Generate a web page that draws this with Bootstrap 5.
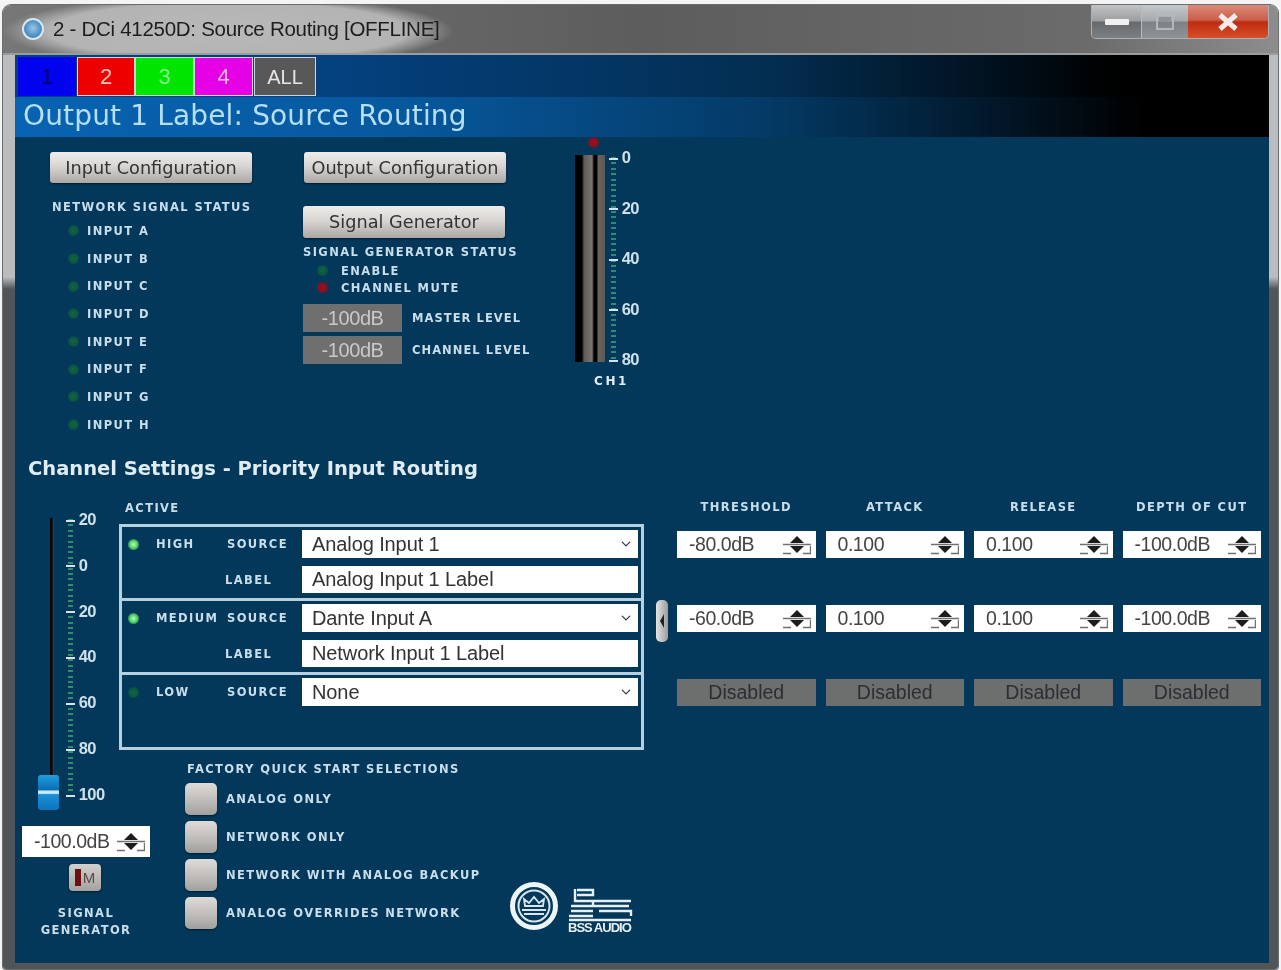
<!DOCTYPE html>
<html lang="en">
<head>
    <meta charset="UTF-8">
    <meta name="viewport" content="width=device-width, initial-scale=1.0">
    <title>Source Routing</title>
    <link href="https://cdn.jsdelivr.net/npm/bootstrap@5.3.3/dist/css/bootstrap.min.css" rel="stylesheet">
    <script src="https://cdn.jsdelivr.net/npm/bootstrap@5.3.3/dist/js/bootstrap.bundle.min.js"></script>
    <style>
        html, body { margin: 0; height: 970px; overflow: hidden; background: #f4f4f4; }
        body { font-family: "Liberation Sans", sans-serif; }

        /* window frame, slightly soft like the source capture */
        .appWin { margin: 5px 3px 0 3px; height: 964px; border-radius: 8px 8px 3px 3px; padding: 0 9px 6px 12px; filter: blur(.55px);
            background: linear-gradient(to bottom, #b9bdc0 0, #b9bdc0 272px, #4f5559 284px, #4f5559 100%);
            box-shadow: 0 0 0 1px #6a6d70; }
        .titleBar { height: 50px; margin: 0 -9px 0 -12px; padding-left: 19px; border-radius: 8px 8px 0 0;
            border-bottom: 2px solid #9a9c9d;
            background: radial-gradient(ellipse 225px 36px at 225px 26px, #b9b9b9 0, #b3b3b3 80%, rgba(150,150,150,0) 100%), linear-gradient(to right, #777 0, #5d5d5d 50%, #6b6b6b 85%, #8d8d8d 100%); }
        .appIcon { width: 22px; height: 22px; border-radius: 50%; flex: none; border: 2px solid #d6e6f2;
            background: radial-gradient(circle at 50% 45%, #9cc6e6 0, #4b8fc4 60%, #2d6ea4 100%); }
        .titleTxt { font-size: 20.5px; color: #1d1d1d; margin-left: 9px; letter-spacing: -.28px; margin-top: 1px; }
        .capBtns { margin-right: 9px; height: 34px; align-self: flex-start; border: 1px solid #aab0b3; border-top: 0; border-radius: 0 0 5px 5px; overflow: hidden; }
        .capBtn { height: 33px; display: flex; align-items: center; justify-content: center; }
        .capMin { width: 50px; background: linear-gradient(#c2c4c5 0, #9b9d9f 48%, #666a6d 52%, #7c8083 100%); border-right: 1px solid #b8babc; }
        .capMax { width: 46px; background: linear-gradient(#c4c8ca 0, #a5a9ab 48%, #7b8184 52%, #8d9396 100%); }
        .capClose { width: 80px; background: linear-gradient(#dd8a7a 0, #c95f4b 45%, #bf2b10 52%, #d64f2a 100%); }

        /* client area */
        .clientArea { height: 908px; background: #03385a; }
        .bandTop { height: 42px; padding: 2px 0 0 3px; background: linear-gradient(to right, #053f7e 0, #04417f 25%, #032e52 60%, #000 88%, #000 100%); }
        .chanTab { height: 39px; border-radius: 0; border: 1px solid #c9d6dc; padding: 0; font-size: 22px; line-height: 1; color: #fff; }
        .tabOne, .tabOne:hover { width: 58px; background: #0202ee; border-color: #0202ee; color: #01015e; }
        .tabTwo, .tabTwo:hover { width: 58px; background: #ee0000; margin-left: 1px; color: #ffc9c0; }
        .tabThree, .tabThree:hover { width: 59px; background: #00e500; color: #86f48a; }
        .tabFour, .tabFour:hover { width: 59px; background: #e600e6; color: #f9b9f4; }
        .tabAll, .tabAll:hover { width: 62px; background: #585858; margin-left: 1px; color: #e6e6e6; font-size: 20px; }
        .bandTitle { height: 40px; padding-left: 8px; font-family: "DejaVu Sans", sans-serif; font-size: 28px; letter-spacing: .15px; line-height: 37px; color: #b5dff5;
            background: linear-gradient(to right, #0863b2 0, #07599f 30%, #043a66 60%, #000 90%, #000 100%); }

        /* square label font */
        .tinyLbl { font-family: "DejaVu Sans", sans-serif; font-weight: 700; font-size: 11.5px; letter-spacing: 1.4px; line-height: 14px; color: #c8deeb; white-space: nowrap; }

        .greyBtn { width: 202px; height: 31px; padding: 0; border: 0; border-radius: 3px; font-family: "DejaVu Sans", sans-serif; font-size: 17.7px; line-height: 26px; color: #333; white-space: nowrap;
            background: linear-gradient(#efedeb 0, #d8d5d2 45%, #aaa7a4 100%); box-shadow: 0 1px 2px #011c2e; }
        .outCfgBtn { margin: 0 0 23px 1px; }
        .genBtn { height: 32px; }

        .ledDot { width: 11px; height: 11px; border-radius: 50%; flex: none; }
        .ledOff { background: radial-gradient(circle, #11663a 0, #0d5a42 45%, rgba(3,56,90,0) 100%); }
        .ledOn { background: radial-gradient(circle, #c9f8b8 0, #54d866 45%, rgba(3,56,90,0) 100%); }
        .ledRed { background: radial-gradient(circle, #a0101c 0, #8a0f22 50%, rgba(3,56,90,0) 100%); }

        /* upper part */
        .upperPane { height: 318px; }
        .netCol { width: 288px; padding: 15px 0 0 35px; }
        .netHead { margin-top: 17px; margin-bottom: 3px; padding-left: 2px; }
        .netRow { height: 27.7px; padding-left: 18px; gap: 8px; }
        .genCol { width: 272px; padding-top: 15px; }
        .genStatus { margin-top: 7px; }
        .genRow { height: 17px; padding-left: 14px; gap: 13px; }
        .genFirst { margin-top: 3px; }
        .levelBox { width: 99px; height: 28px; background: #6f6f6f; color: #c9c9c9; font-size: 20px; line-height: 28px; text-align: center; letter-spacing: -.4px; }
        .levelTxt { margin-left: 2px; letter-spacing: 1.05px; }
        .meterCol { width: 76px; }
        .clipLed { width: 11px; height: 11px; margin: 0 0 7px 13px; }
        .meterBar { width: 31px; height: 207px; background: linear-gradient(to right, #000 0, #000 7px, #5f5a5a 9px, #7a7472 17px, #000 19px, #000 22px, #6a6460 23px, #5b5855 30px, #03385a 31px); }
        .scaleCol { height: 222px; margin-top: -8px; width: 44px; font-size: 16.5px; font-weight: 700; line-height: 20px; color: #cfe0ea; letter-spacing: -.6px;
            background: repeating-linear-gradient(to bottom, #2f8c72 0, #2f8c72 2px, transparent 2px, transparent 5.4px) 2px 10px / 5px calc(100% - 20px) no-repeat; }
        .scaleRow::before { content: ""; display: inline-block; width: 9px; height: 2px; background: #d5e3ea; vertical-align: middle; margin: 0 4px 0 0; }
        .ch1Txt { margin: 5px 0 0 19px; font-size: 12px; letter-spacing: 2.6px; color: #e2edf3; }

        .chHeading { height: 26px; padding-left: 13px; font-family: "DejaVu Sans", sans-serif; font-weight: 700; font-size: 19.5px; line-height: 28px; color: #dfecf3; }

        /* lower part */
        .faderCol { width: 104px; padding-top: 28px; flex: none; }
        .faderWrap { height: 295px; padding-left: 35px; position: relative; }
        .faderTrack { width: 4px; height: 272px; margin-top: 9px; background: linear-gradient(to right, #000, #111 60%, #33505f); }
        .faderKnob { position: absolute; left: 23px; top: 266px; width: 21px; height: 35px; border-radius: 3px;
            background: linear-gradient(#1f9fe0 0, #0a6fb5 42%, #bfe7f8 46%, #d8f0fb 52%, #1c8fd4 56%, #0c74bd 100%); }
        .faderScale { width: 56px; height: 295px; margin: 0 0 0 12px; }
        .faderSpin { width: 128px; height: 31px; margin: 22px 0 0 7px; background: #fff; }
        .muteBtn { width: 32px; height: 27px; margin: 7px 0 0 54px; padding: 0; border: 0; border-radius: 4px; font-size: 15px; line-height: 27px; color: #5a4a4a;
            background: linear-gradient(#d2cfcc, #a5a3a1); box-shadow: 0 1px 2px #011c2e; }
        .muteBar { display: inline-block; width: 6px; height: 17px; background: #6d1015; vertical-align: -3px; margin-right: 2px; }
        .sigGenLbl { width: 142px; margin-top: 14px; text-align: center; line-height: 17px; }

        .midCol { width: 525px; padding-top: 20px; flex: none; }
        .activeLbl { padding-left: 6px; }
        .routeBox { height: 226px; margin-top: 9px; border: 3px solid #b7d0dd; }
        .routeRow { height: 71px; padding: 3px 0 0 0; }
        .routeRow + .routeRow { border-top: 3px solid #b7d0dd; height: 74px; }
        .ledCell { width: 34px; padding-left: 6px; flex: none; }
        .lvlCell { width: 69px; flex: none; }
        .srcCell { width: 77px; flex: none; }
        .srcName { padding-left: 2px; }
        .routeField { width: 336px; height: 28px; border: 0; border-radius: 0; padding: 0 0 0 10px; font-size: 20px; line-height: 27px; letter-spacing: -.1px; color: #333; background-color: #fff; }
        .routeField.labelField { height: 27px; }
        .routeField.form-select { background-position: right 6px center; background-size: 12px 10px; }
        .quickWrap { margin: 12px 0 0 66px; }
        .quickList { width: 324px; flex: none; }
        .quickHead { padding-left: 2px; margin-bottom: 7px; }
        .quickRow { height: 32px; margin-bottom: 6px; gap: 9px; }
        .quickBtn { width: 32px; height: 32px; padding: 0; border: 0; border-radius: 5px; background: linear-gradient(#dedbd8, #bcb9b6 60%, #a19f9d); box-shadow: 0 1px 2px #011c2e; }
        .logoBox { margin-top: 118px; }

        .rightCol { padding-top: 19px; flex: 1; }
        .handleCol { width: 33px; padding: 119px 0 0 12px; flex: none; }
        .arrowHandle { width: 12px; height: 42px; padding: 0; border: 0; border-radius: 5px; display: flex; align-items: center; justify-content: center; background: linear-gradient(to right, #e4e4e4, #9c9c9c); }
        .paramGrid { width: 584px; display: grid; grid-template-columns: repeat(4, 138.5px); column-gap: 10px; }
        .paramHead { height: 14px; text-align: center; margin-bottom: 17px; }
        .spinBox { height: 27px; margin-bottom: 47px; background: #fff; }
        .spinInput { flex: 1; min-width: 0; height: 100%; border: 0; border-radius: 0; padding: 0 0 0 12px; font-size: 19.5px; letter-spacing: -.45px; color: #444; background: transparent; }
        .spinArrows { flex: none; margin-right: 5px; }
        .offBox { height: 27px; background: #6d6e6e; color: #2a2f33; text-align: center; font-size: 19.5px; line-height: 27px; }
    </style>
</head>
<body>

<svg width="0" height="0" class="d-none">
    <symbol id="spinIcon" viewBox="0 0 28 20">
        <path d="M14 1 L21 8 H7 Z" fill="#1c1c1c"/>
        <path d="M14 18 L7 11 H21 Z" fill="#1c1c1c"/>
        <path d="M0 9.5 H28 M0 18.5 H8 M20 18.5 H28 M27.5 11 V19" stroke="#707070" stroke-width="1.4" fill="none"/>
    </symbol>
</svg>

<div class="appWin">
    <div class="titleBar d-flex align-items-center">
        <span class="appIcon"></span>
        <span class="titleTxt">2 - DCi 41250D: Source Routing [OFFLINE]</span>
        <div class="capBtns d-flex ms-auto">
            <div class="capBtn capMin"><svg width="24" height="6"><rect width="24" height="6" rx="1" fill="#f1f1f1"/></svg></div>
            <div class="capBtn capMax"><svg width="18" height="16"><rect x="1" y="1" width="16" height="14" fill="none" stroke="#b4b8ba" stroke-width="2"/><rect x="3" y="3" width="12" height="4" fill="#8f9496"/></svg></div>
            <div class="capBtn capClose"><svg width="22" height="18"><path d="M3 2 L19 16 M19 2 L3 16" stroke="#f2ece8" stroke-width="5"/></svg></div>
        </div>
    </div>

    <div class="clientArea">
        <div class="bandTop d-flex">
            <button type="button" class="btn chanTab tabOne">1</button>
            <button type="button" class="btn chanTab tabTwo">2</button>
            <button type="button" class="btn chanTab tabThree">3</button>
            <button type="button" class="btn chanTab tabFour">4</button>
            <button type="button" class="btn chanTab tabAll">ALL</button>
        </div>
        <div class="bandTitle">Output 1 Label: Source Routing</div>

        <div class="upperPane d-flex">
            <div class="netCol">
                <button type="button" class="btn greyBtn">Input Configuration</button>
                <div class="tinyLbl netHead">NETWORK SIGNAL STATUS</div>
                <div class="netRow d-flex align-items-center"><span class="ledDot ledOff"></span><span class="tinyLbl">INPUT A</span></div>
                <div class="netRow d-flex align-items-center"><span class="ledDot ledOff"></span><span class="tinyLbl">INPUT B</span></div>
                <div class="netRow d-flex align-items-center"><span class="ledDot ledOff"></span><span class="tinyLbl">INPUT C</span></div>
                <div class="netRow d-flex align-items-center"><span class="ledDot ledOff"></span><span class="tinyLbl">INPUT D</span></div>
                <div class="netRow d-flex align-items-center"><span class="ledDot ledOff"></span><span class="tinyLbl">INPUT E</span></div>
                <div class="netRow d-flex align-items-center"><span class="ledDot ledOff"></span><span class="tinyLbl">INPUT F</span></div>
                <div class="netRow d-flex align-items-center"><span class="ledDot ledOff"></span><span class="tinyLbl">INPUT G</span></div>
                <div class="netRow d-flex align-items-center"><span class="ledDot ledOff"></span><span class="tinyLbl">INPUT H</span></div>
            </div>

            <div class="genCol">
                <button type="button" class="btn greyBtn d-block outCfgBtn">Output Configuration</button>
                <button type="button" class="btn greyBtn genBtn d-block">Signal Generator</button>
                <div class="tinyLbl genStatus">SIGNAL GENERATOR STATUS</div>
                <div class="genRow genFirst d-flex align-items-center"><span class="ledDot ledOff"></span><span class="tinyLbl">ENABLE</span></div>
                <div class="genRow d-flex align-items-center"><span class="ledDot ledRed"></span><span class="tinyLbl">CHANNEL MUTE</span></div>
                <div class="d-flex align-items-center gap-2 mt-2"><div class="levelBox">-100dB</div><span class="tinyLbl levelTxt">MASTER LEVEL</span></div>
                <div class="d-flex align-items-center gap-2 mt-1"><div class="levelBox">-100dB</div><span class="tinyLbl levelTxt">CHANNEL LEVEL</span></div>
            </div>

            <div class="meterCol">
                <div class="ledDot ledRed clipLed"></div>
                <div class="d-flex">
                    <div class="meterBar"></div>
                    <div class="scaleCol d-flex flex-column justify-content-between ms-1">
                        <div class="scaleRow">0</div>
                        <div class="scaleRow">20</div>
                        <div class="scaleRow">40</div>
                        <div class="scaleRow">60</div>
                        <div class="scaleRow">80</div>
                    </div>
                </div>
                <div class="tinyLbl ch1Txt">CH1</div>
            </div>
        </div>

        <div class="chHeading">Channel Settings - Priority Input Routing</div>

        <div class="d-flex">
            <div class="faderCol">
                <div class="faderWrap d-flex">
                    <div class="faderTrack"></div>
                    <div class="faderKnob"></div>
                    <div class="scaleCol faderScale d-flex flex-column justify-content-between">
                        <div class="scaleRow">20</div>
                        <div class="scaleRow">0</div>
                        <div class="scaleRow">20</div>
                        <div class="scaleRow">40</div>
                        <div class="scaleRow">60</div>
                        <div class="scaleRow">80</div>
                        <div class="scaleRow">100</div>
                    </div>
                </div>
                <div class="faderSpin d-flex align-items-center">
                    <input type="text" class="form-control spinInput" value="-100.0dB">
                    <svg class="spinArrows" width="28" height="20"><use href="#spinIcon"/></svg>
                </div>
                <button type="button" class="btn muteBtn d-block"><span class="muteBar"></span>M</button>
                <div class="tinyLbl sigGenLbl">SIGNAL<br>GENERATOR</div>
            </div>

            <div class="midCol">
                <div class="tinyLbl activeLbl">ACTIVE</div>
                <div class="routeBox">
                    <div class="routeRow">
                        <div class="d-flex align-items-center mb-2">
                            <div class="ledCell"><div class="ledDot ledOn"></div></div>
                            <div class="lvlCell tinyLbl">HIGH</div>
                            <div class="srcCell srcName tinyLbl">SOURCE</div>
                            <select class="form-select routeField"><option>Analog Input 1</option></select>
                        </div>
                        <div class="d-flex align-items-center">
                            <div class="ledCell"></div>
                            <div class="lvlCell"></div>
                            <div class="srcCell tinyLbl">LABEL</div>
                            <input type="text" class="form-control routeField labelField" value="Analog Input 1 Label">
                        </div>
                    </div>
                    <div class="routeRow">
                        <div class="d-flex align-items-center mb-2">
                            <div class="ledCell"><div class="ledDot ledOn"></div></div>
                            <div class="lvlCell tinyLbl">MEDIUM</div>
                            <div class="srcCell srcName tinyLbl">SOURCE</div>
                            <select class="form-select routeField"><option>Dante Input A</option></select>
                        </div>
                        <div class="d-flex align-items-center">
                            <div class="ledCell"></div>
                            <div class="lvlCell"></div>
                            <div class="srcCell tinyLbl">LABEL</div>
                            <input type="text" class="form-control routeField labelField" value="Network Input 1 Label">
                        </div>
                    </div>
                    <div class="routeRow">
                        <div class="d-flex align-items-center">
                            <div class="ledCell"><div class="ledDot ledOff"></div></div>
                            <div class="lvlCell tinyLbl">LOW</div>
                            <div class="srcCell srcName tinyLbl">SOURCE</div>
                            <select class="form-select routeField"><option>None</option></select>
                        </div>
                    </div>
                </div>

                <div class="quickWrap d-flex">
                    <div class="quickList">
                        <div class="tinyLbl quickHead">FACTORY QUICK START SELECTIONS</div>
                        <div class="quickRow d-flex align-items-center"><button type="button" class="btn quickBtn"></button><span class="tinyLbl">ANALOG ONLY</span></div>
                        <div class="quickRow d-flex align-items-center"><button type="button" class="btn quickBtn"></button><span class="tinyLbl">NETWORK ONLY</span></div>
                        <div class="quickRow d-flex align-items-center"><button type="button" class="btn quickBtn"></button><span class="tinyLbl">NETWORK WITH ANALOG BACKUP</span></div>
                        <div class="quickRow d-flex align-items-center"><button type="button" class="btn quickBtn"></button><span class="tinyLbl">ANALOG OVERRIDES NETWORK</span></div>
                    </div>
                    <div class="logoBox">
                        <svg width="124" height="54" viewBox="0 0 124 54">
                            <circle cx="25" cy="26" r="21.5" fill="none" stroke="#eef5f8" stroke-width="5"/>
                            <circle cx="25" cy="26" r="15.5" fill="none" stroke="#d8e6ec" stroke-width="2"/>
                            <path d="M16 26 L15 19 L20 23 L25 17 L30 23 L35 19 L34 26 Z" fill="none" stroke="#d8e6ec" stroke-width="1.8"/>
                            <path d="M13 30 H37 M15 34 H35" stroke="#d8e6ec" stroke-width="2"/>
                            <path d="M68 10 H84 V15 H68 M66 9 V21 H122 M62 26 H120 M84 21 V26 M62 31 H84 M90 31 H122 V36 M60 36 H84 M60 40 H122" stroke="#e6f0f4" stroke-width="2.4" fill="none"/>
                            <text x="59" y="52" font-family="Liberation Sans, sans-serif" font-weight="700" font-size="13" letter-spacing="-1" fill="#e6f0f4">BSS AUDIO</text>
                        </svg>
                    </div>
                </div>
            </div>

            <div class="handleCol">
                <button type="button" class="btn arrowHandle"><svg width="6" height="18"><path d="M5 2 L1 9 L5 16 Z" fill="#222"/></svg></button>
            </div>

            <div class="rightCol">
                <div class="paramGrid">
                    <div class="tinyLbl paramHead">THRESHOLD</div>
                    <div class="tinyLbl paramHead">ATTACK</div>
                    <div class="tinyLbl paramHead">RELEASE</div>
                    <div class="tinyLbl paramHead">DEPTH OF CUT</div>

                    <div class="spinBox d-flex align-items-center"><input type="text" class="form-control spinInput" value="-80.0dB"><svg class="spinArrows" width="28" height="20"><use href="#spinIcon"/></svg></div>
                    <div class="spinBox d-flex align-items-center"><input type="text" class="form-control spinInput" value="0.100"><svg class="spinArrows" width="28" height="20"><use href="#spinIcon"/></svg></div>
                    <div class="spinBox d-flex align-items-center"><input type="text" class="form-control spinInput" value="0.100"><svg class="spinArrows" width="28" height="20"><use href="#spinIcon"/></svg></div>
                    <div class="spinBox d-flex align-items-center"><input type="text" class="form-control spinInput" value="-100.0dB"><svg class="spinArrows" width="28" height="20"><use href="#spinIcon"/></svg></div>

                    <div class="spinBox d-flex align-items-center"><input type="text" class="form-control spinInput" value="-60.0dB"><svg class="spinArrows" width="28" height="20"><use href="#spinIcon"/></svg></div>
                    <div class="spinBox d-flex align-items-center"><input type="text" class="form-control spinInput" value="0.100"><svg class="spinArrows" width="28" height="20"><use href="#spinIcon"/></svg></div>
                    <div class="spinBox d-flex align-items-center"><input type="text" class="form-control spinInput" value="0.100"><svg class="spinArrows" width="28" height="20"><use href="#spinIcon"/></svg></div>
                    <div class="spinBox d-flex align-items-center"><input type="text" class="form-control spinInput" value="-100.0dB"><svg class="spinArrows" width="28" height="20"><use href="#spinIcon"/></svg></div>

                    <div class="offBox">Disabled</div>
                    <div class="offBox">Disabled</div>
                    <div class="offBox">Disabled</div>
                    <div class="offBox">Disabled</div>
                </div>
            </div>
        </div>
    </div>
</div>

</body>
</html>
